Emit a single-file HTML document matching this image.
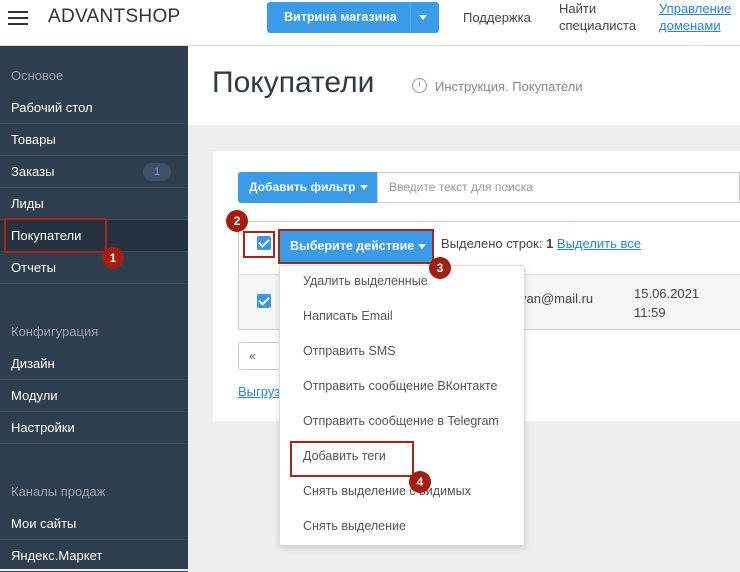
<!DOCTYPE html><html><head><meta charset="utf-8"><style>
*{box-sizing:border-box;margin:0;padding:0}
body{width:740px;height:569px;overflow:hidden;font-family:"Liberation Sans","DejaVu Sans",sans-serif;background:#eee;position:relative;font-size:13px;color:#333}
.a{position:absolute}
.hdr{left:0;top:0;width:740px;height:46px;background:#fff;border-bottom:1px solid #ddd}
.side{left:0;top:46px;width:188px;height:523px;background:#2f3e4e}
.si{position:absolute;left:0;width:188px;height:32px;border-bottom:1px solid #3b4a5a;color:#fff;font-size:13px;padding-left:11px;line-height:32px}
.sh{position:absolute;left:11px;color:#9aa4ae;font-size:13px}
.mi{position:absolute;left:303px;font-size:12.5px;color:#555}
.badge{position:absolute;width:10px;height:10px}
.num{position:absolute;width:22px;height:22px;border-radius:50%;background:#a51d0f;color:#fff;font-weight:bold;font-size:12px;text-align:center;line-height:22px}
.rb{position:absolute;border:2px solid #a82618}
.cb{position:absolute;width:14px;height:14px;background:#3a97e8;border-radius:2px}
.cb:after{content:"";position:absolute;left:4px;top:1px;width:4px;height:8px;border:solid #fff;border-width:0 2px 2px 0;transform:rotate(45deg)}
</style></head><body>
<div class="a hdr"></div>
<div class="a" style="left:8px;top:11px;width:20px;height:2px;background:#333;box-shadow:0 6px 0 #333,0 12px 0 #333"></div>
<div class="a" style="left:48px;top:6px;font-size:19px;color:#333;letter-spacing:.3px">ADVANTSHOP</div>
<div class="a" style="left:267px;top:2px;width:172px;height:31px;background:#3a9be8;border-radius:3px;color:#fff;font-weight:bold;font-size:12.5px;line-height:31px;padding-left:17px">Витрина магазина<span style="position:absolute;left:143px;top:0;width:1px;height:31px;background:#5eb0ef"></span><span style="position:absolute;left:152px;top:13px;border:4px solid transparent;border-top:5px solid #fff"></span></div>
<div class="a" style="left:463px;top:10px;font-size:13px;color:#444">Поддержка</div>
<div class="a" style="left:559px;top:0;font-size:13px;color:#444;line-height:17px">Найти<br>специалиста</div>
<div class="a" style="left:659px;top:0;font-size:13px;color:#2a84d8;line-height:17px;text-decoration:underline">Управление<br>доменами</div>
<div class="a side"></div>
<div class="sh" style="top:68px">Основое</div>
<div class="si" style="top:92px">Рабочий стол</div>
<div class="si" style="top:124px">Товары</div>
<div class="si" style="top:156px">Заказы<span style="position:absolute;left:143px;top:7px;width:28px;height:18px;border-radius:9px;background:#3d5266;color:#5aa6ea;font-size:11px;line-height:18px;text-align:center">1</span></div>
<div class="si" style="top:188px">Лиды</div>
<div class="si" style="top:220px;background:#253240">Покупатели</div>
<div class="si" style="top:252px">Отчеты</div>
<div class="rb" style="left:4px;top:218px;width:103px;height:35px"></div>
<div class="num" style="left:102px;top:247px">1</div>
<div class="sh" style="top:324px">Конфигурация</div>
<div class="si" style="top:348px">Дизайн</div>
<div class="si" style="top:380px">Модули</div>
<div class="si" style="top:412px">Настройки</div>
<div class="sh" style="top:484px">Каналы продаж</div>
<div class="si" style="top:508px">Мои сайты</div>
<div class="si" style="top:540px">Яндекс.Маркет</div>
<div class="a" style="left:188px;top:46px;width:552px;height:79px;background:#fff"></div>
<div class="a" style="left:212px;top:66px;font-size:30px;color:#2e3a46">Покупатели</div>
<div class="a" style="left:412px;top:78px;width:15px;height:15px;border:1.5px solid #999;border-radius:50%;font-size:10px;color:#999;text-align:center;line-height:12px">i</div>
<div class="a" style="left:435px;top:79px;color:#888;font-size:13px">Инструкция. Покупатели</div>
<div class="a" style="left:213px;top:151px;width:527px;height:270px;background:#fff"></div>
<div class="a" style="left:238px;top:172px;width:139px;height:31px;background:#3a9be8;border-radius:3px 0 0 3px;color:#fff;font-weight:bold;font-size:12px;line-height:31px;padding-left:11px">Добавить фильтр<span style="position:absolute;left:122px;top:13px;border:4px solid transparent;border-top:5px solid #fff"></span></div>
<div class="a" style="left:377px;top:172px;width:363px;height:31px;border:1px solid #ccc;color:#999;font-size:12px;line-height:29px;padding-left:11px">Введите текст для поиска</div>
<div class="a" style="left:238px;top:221px;width:502px;height:109px;border:1px solid #ccc;border-right:none"></div>
<div class="a" style="left:239px;top:274px;width:501px;height:55px;background:#f5f5f5;border-top:1px solid #ddd"></div>
<div class="cb" style="left:257px;top:236px"></div>
<div class="rb" style="left:243px;top:231px;width:32px;height:27px"></div>
<div class="num" style="left:226px;top:210px">2</div>
<div class="a" style="left:280px;top:231px;width:153px;height:31px;background:#3a9be8;color:#fff;font-weight:bold;font-size:12.5px;line-height:31px;padding-left:10px">Выберите действие<span style="position:absolute;left:138px;top:13px;border:4px solid transparent;border-top:5px solid #fff"></span></div>
<div class="rb" style="left:278px;top:229px;width:156px;height:35px"></div>
<div class="a" style="left:441px;top:236px;font-size:13px;color:#444">Выделено строк: <b>1</b> <span style="color:#2a84d8;text-decoration:underline">Выделить все</span></div>
<div class="cb" style="left:257px;top:294px"></div>
<div class="a" style="left:520px;top:291px;font-size:13px;color:#444">van@mail.ru</div>
<div class="a" style="left:634px;top:284px;font-size:13px;color:#444;line-height:19px">15.06.2021<br>11:59</div>
<div class="a" style="left:238px;top:342px;width:50px;height:28px;border:1px solid #ccc;border-radius:3px;color:#666;font-size:12px;line-height:26px;padding-left:10px">«</div>
<div class="a" style="left:238px;top:384px;font-size:13px;color:#2a84d8;text-decoration:underline">Выгрузить</div>
<div class="a" style="left:279px;top:265px;width:246px;height:281px;background:#fff;border:1px solid #ddd;border-radius:3px;box-shadow:0 2px 6px rgba(0,0,0,.15)"></div>
<div class="mi" style="top:274px">Удалить выделенные</div>
<div class="mi" style="top:309px">Написать Email</div>
<div class="mi" style="top:344px">Отправить SMS</div>
<div class="mi" style="top:379px">Отправить сообщение ВКонтакте</div>
<div class="mi" style="top:414px">Отправить сообщение в Telegram</div>
<div class="mi" style="top:449px">Добавить теги</div>
<div class="mi" style="top:484px">Снять выделение с видимых</div>
<div class="mi" style="top:519px">Снять выделение</div>
<div class="num" style="left:429px;top:257px">3</div>
<div class="rb" style="left:290px;top:441px;width:124px;height:36px"></div>
<div class="num" style="left:409px;top:471px">4</div>
</body></html>
